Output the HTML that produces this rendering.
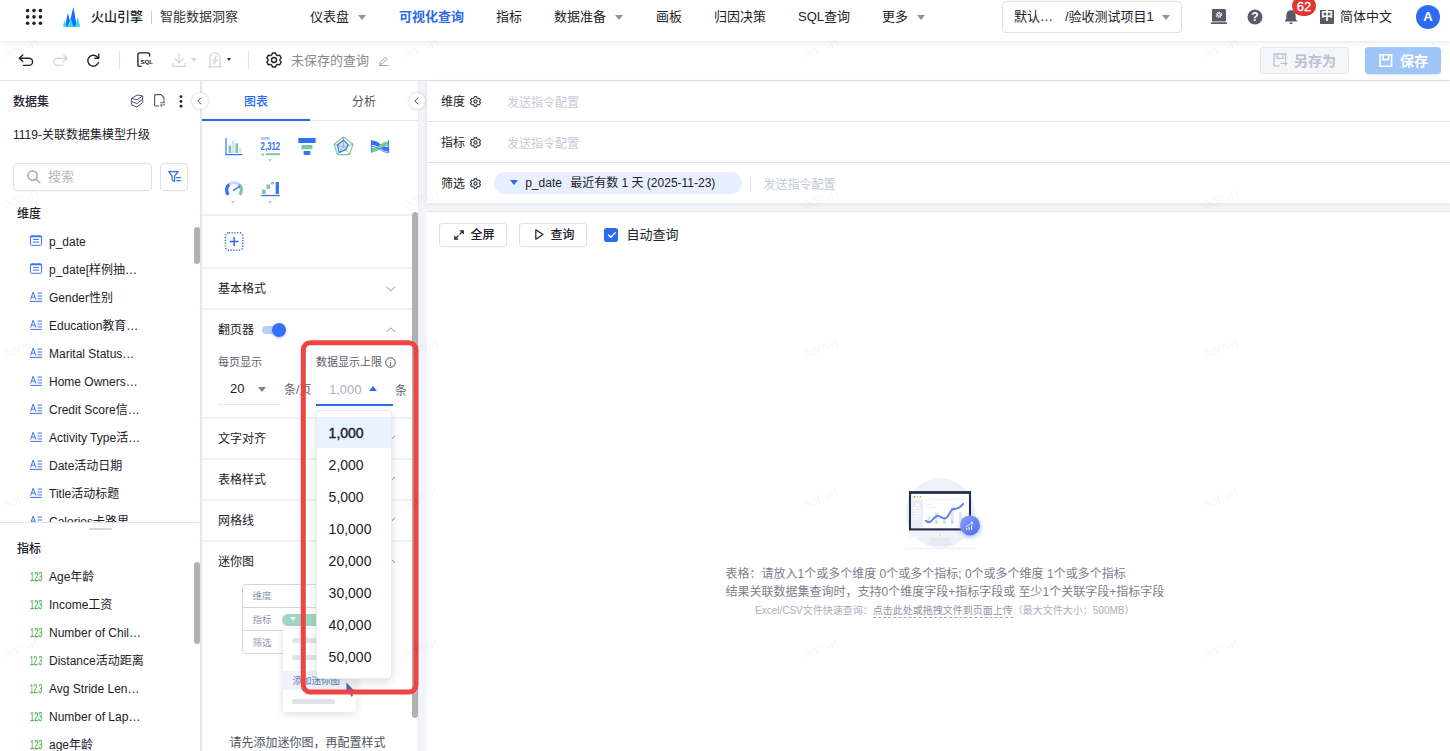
<!DOCTYPE html>
<html lang="zh-CN">
<head>
<meta charset="utf-8">
<title>智能数据洞察</title>
<style>
*{box-sizing:border-box;margin:0;padding:0}
html,body{width:1450px;height:751px;overflow:hidden;background:#fff}
body{font-family:"Liberation Sans","Noto Sans CJK SC",sans-serif;font-size:12px;color:#1d2129;position:relative}
.a{position:absolute;white-space:nowrap}
.t{position:absolute;white-space:nowrap;line-height:20px;height:20px}
svg{position:absolute;overflow:visible}
/* nav */
#nav{position:absolute;left:0;top:0;width:1450px;height:41px;background:#fff;box-shadow:0 1px 5px rgba(0,0,0,.10);z-index:5}
#nav .t{font-size:13px;color:#1d2129;top:7px}
.tri{position:absolute;width:0;height:0;border-left:4px solid transparent;border-right:4px solid transparent;border-top:5px solid #8a93a6}
/* toolbar */
#tb{position:absolute;left:0;top:41px;width:1450px;height:40px;background:#fff;border-bottom:1px solid #dfe2ee}
/* left */
#left{z-index:4;position:absolute;left:0;top:81px;width:202px;height:670px;background:#fff;border-right:2px solid #e4e6f0}
#mid{z-index:3;position:absolute;left:201px;top:81px;width:217px;height:670px;background:#fff}
#gap{position:absolute;left:418px;top:81px;width:9px;height:670px;background:#f3f4f9;box-shadow:inset 1px 0 0 #e9ebf2}
#right{position:absolute;left:427px;top:81px;width:1023px;height:670px;background:#f3f4f9}

.li{position:absolute;left:49px;margin-top:1px;font-size:12px;line-height:20px;height:20px;white-space:nowrap;color:#1d2129}
.n123{-webkit-text-stroke:.25px #52b45a;position:absolute;left:30px;margin-top:1px;font-size:12.5px;line-height:20px;height:20px;color:#52b45a;transform:scaleX(.6);transform-origin:0 50%;white-space:nowrap}
.sb{position:absolute;width:6px;border-radius:3px;background:#b1b1b1}

#mid .t{font-size:12px}
.hd{position:absolute;left:0;width:211px;height:2px;background:#eff1f6}
.dtri{position:absolute;width:0;height:0;border-left:2.6px solid transparent;border-right:2.6px solid transparent;border-top:3px solid #b9c9f9}
.chev{position:absolute}
.dd{position:absolute;left:328px;font-size:14px;line-height:32px;height:32px;color:#1d2129}

#right .t{font-size:12px}
.ph{color:#c5cad6}
.gearS{position:absolute}
.btn{position:absolute;height:23px;border:1px solid #dcdfe6;border-radius:3px;background:#fff}
.wm{position:absolute;font-size:14px;color:rgba(0,0,0,.055);transform:rotate(-20deg);width:60px;height:20px;line-height:20px;text-align:center;z-index:9;pointer-events:none;font-family:"Liberation Sans",sans-serif;letter-spacing:-.3px}
</style>
</head>
<body>
<div id="nav">
<svg style="left:24px;top:7px" width="20" height="20" viewBox="0 0 20 20"><g fill="#1d2129"><circle cx="3.6" cy="3.6" r="1.8"/><circle cx="10" cy="3.6" r="1.8"/><circle cx="16.4" cy="3.6" r="1.8"/><circle cx="3.6" cy="9.9" r="1.8"/><circle cx="10" cy="9.9" r="1.8"/><circle cx="16.4" cy="9.9" r="1.8"/><circle cx="3.6" cy="16.2" r="1.8"/><circle cx="10" cy="16.2" r="1.8"/><circle cx="16.4" cy="16.2" r="1.8"/></g></svg>
<svg style="left:63px;top:7px" width="18" height="20" viewBox="0 0 18 20"><path d="M2 19.7 L4.8 6.1 L7 14 L10.4 0 L14 19.7 Z" fill="#1a6cff"/><path d="M0 19.7 L1.3 13.3 L3.5 19.7Z M4.6 19.7 L7.7 10.9 L10.4 19.7Z M12.2 19.7 L14.7 10 L17.2 19.7Z" fill="#2fdfe6"/></svg>
<div class="t" style="left:91px;font-weight:500">火山引擎</div>
<div class="a" style="left:151px;top:11px;width:1px;height:13px;background:#c9cdd4"></div>
<div class="t" style="left:160px;color:#333">智能数据洞察</div>
<div class="t" style="left:310px">仪表盘</div><div class="tri" style="left:358px;top:15px"></div>
<div class="t" style="left:399px;color:#2b6bf0;font-weight:bold">可视化查询</div>
<div class="t" style="left:496px">指标</div>
<div class="t" style="left:554px">数据准备</div><div class="tri" style="left:615px;top:15px"></div>
<div class="t" style="left:656px">画板</div>
<div class="t" style="left:714px">归因决策</div>
<div class="t" style="left:798px">SQL查询</div>
<div class="t" style="left:882px">更多</div><div class="tri" style="left:917px;top:15px"></div>
<div class="a" style="left:1002px;top:1px;width:180px;height:32px;border:1px solid #dcdfe6;border-radius:4px"></div>
<div class="t" style="left:1014px">默认…</div>
<div class="t" style="left:1065px">/验收测试项目1</div><div class="tri" style="left:1162px;top:15px"></div>
<svg style="left:1211px;top:9px" width="16" height="15" viewBox="0 0 16 15"><rect x="1" y="0" width="14" height="12.4" rx="1.2" fill="#565b66"/><rect x="0" y="13.3" width="16" height="1.6" rx=".5" fill="#565b66"/><circle cx="8" cy="5.8" r="2.5" fill="none" stroke="#fff" stroke-width="1.5" stroke-dasharray="1 0.96"/><circle cx="8" cy="5.8" r="1.9" fill="#fff"/><circle cx="8" cy="5.8" r=".9" fill="#565b66"/></svg>
<svg style="left:1247px;top:9px" width="16" height="16" viewBox="0 0 16 16"><circle cx="8" cy="8" r="7.5" fill="#565b66"/><text x="8" y="12.4" font-size="12" font-weight="bold" fill="#fff" text-anchor="middle" font-family="Liberation Sans, sans-serif">?</text></svg>
<svg style="left:1284px;top:10px" width="14" height="15" viewBox="0 0 14 15"><path d="M7 0.3 C3.8 0.3 2.3 2.8 2.3 5.6 L2.3 8.8 L0.6 11.4 L13.4 11.4 L11.7 8.8 L11.7 5.6 C11.7 2.8 10.2 0.3 7 0.3 Z" fill="#565b66"/><path d="M5.3 12.6 L8.7 12.6 C8.7 14.8 5.3 14.8 5.3 12.6Z" fill="#565b66"/></svg>
<div class="a" style="left:1292px;top:-4px;width:24px;height:20px;border-radius:10px;background:#e03535;color:#fff;font-size:13px;-webkit-text-stroke:.3px #fff;text-align:center;line-height:22px">62</div>
<div class="a" style="left:1320px;top:10px;width:14px;height:14px;background:#565b66;color:#fff;font-size:12px;line-height:13px;text-align:center;font-weight:bold;overflow:hidden">中</div>
<div class="t" style="left:1340px">简体中文</div>
<div class="a" style="left:1416px;top:5px;width:24px;height:24px;border-radius:12px;background:#2d6cf0;color:#fff;font-size:13px;font-weight:bold;text-align:center;line-height:24px">A</div>
</div>
<div id="tb">
<svg style="left:17px;top:11px" width="18" height="16" viewBox="0 0 18 16" fill="none" stroke="#23262d" stroke-width="1.4" stroke-linecap="round" stroke-linejoin="round"><path d="M5.8 3 L2.3 6.3 L5.8 9.6 M2.5 6.3 L12 6.3 A3.55 3.55 0 0 1 12 13.4 L6.4 13.4"/></svg>
<svg style="left:51px;top:11px" width="18" height="16" viewBox="0 0 18 16" fill="none" stroke="#d3d5da" stroke-width="1.4" stroke-linecap="round" stroke-linejoin="round"><path d="M12.6 3 L16.1 6.3 L12.6 9.6 M15.9 6.3 L6.4 6.3 A3.55 3.55 0 0 0 6.4 13.4 L12 13.4"/></svg>
<svg style="left:85px;top:11px" width="16" height="16" viewBox="0 0 16 16" fill="none" stroke="#23262d" stroke-width="1.4" stroke-linecap="round" stroke-linejoin="round"><path d="M13.06 5.85 A5.5 5.5 0 1 0 13.5 10.6"/><path d="M13.8 2.2 L13.8 6.2 L9.9 6.2"/></svg>
<div class="a" style="left:119px;top:10px;width:1px;height:18px;background:#d5dffa"></div>
<svg style="left:137px;top:11px" width="17" height="16" viewBox="0 0 17 16" fill="none" stroke="#23262d" stroke-width="1.4" stroke-linecap="round" stroke-linejoin="round"><path d="M12.6 4 L12.6 2.6 C12.6 1.6 11.8 0.9 10.9 0.9 L2.7 0.9 C1.7 0.9 0.9 1.7 0.9 2.6 L0.9 12.6 C0.9 13.6 1.7 14.4 2.7 14.4 L4 14.4"/><text x="3.6" y="12.4" font-size="6.2" font-weight="bold" fill="#23262d" stroke="none" font-family="Liberation Sans, sans-serif" letter-spacing="-0.2">SQL</text></svg>
<svg style="left:172px;top:11px" width="14" height="16" viewBox="0 0 14 16" fill="none" stroke="#d3d5da" stroke-width="1.3" stroke-linecap="round" stroke-linejoin="round"><path d="M7 1.4 L7 10.6 M2.8 6.6 L7 10.8 L11.2 6.6 M0.8 11.4 L0.8 14.4 L13.2 14.4 L13.2 11.4"/></svg>
<div class="tri" style="left:191px;top:17px;border-top-color:#d3d5da;border-width:4px 3px 0 3px"></div>
<svg style="left:208px;top:11px" width="14" height="16" viewBox="0 0 14 16" fill="none" stroke="#d3d5da" stroke-width="1.2" stroke-linecap="round" stroke-linejoin="round"><path d="M2 14.6 L2 6 C2 -0.8 12 -0.8 12 6 L12 14.6 M0.4 14.8 L13.6 14.8"/><path d="M8 4.4 L4.8 8.8 L9.2 8 L6 12.2 M8 4.4 L7.6 7 M6 12.2 L6.4 9.6" stroke-width="1"/></svg>
<div class="tri" style="left:226.6px;top:17.4px;border-top-color:#23262d;border-width:3.4px 2.8px 0 2.8px"></div>
<div class="a" style="left:248px;top:10px;width:1px;height:18px;background:#d5dffa"></div>
<svg style="left:266px;top:11px" width="16" height="16" viewBox="0 0 16 16" fill="none" stroke="#23262d" stroke-width="1.4" stroke-linejoin="round"><path d="M6.4 1 L9.6 1 L10.3 2.9 L11.6 3.6 L13.6 3.2 L15.2 5.9 L13.9 7.4 L13.9 8.6 L15.2 10.1 L13.6 12.8 L11.6 12.4 L10.3 13.1 L9.6 15 L6.4 15 L5.7 13.1 L4.4 12.4 L2.4 12.8 L0.8 10.1 L2.1 8.6 L2.1 7.4 L0.8 5.9 L2.4 3.2 L4.4 3.6 L5.7 2.9 Z"/><circle cx="8" cy="8" r="2.5"/></svg>
<div class="t" style="left:291px;top:10px;font-size:13px;color:#8a8c91">未保存的查询</div>
<svg style="left:378px;top:15px" width="11" height="10" viewBox="0 0 11 10" fill="none" stroke="#a3a5aa" stroke-width="1" stroke-linejoin="round"><path d="M2.2 6.4 L7.4 1.2 L9 2.8 L3.8 8 L1.8 8.4 Z M0.6 9.5 L10.4 9.5"/></svg>
<div class="a" style="left:1260px;top:5.6px;width:89px;height:27.8px;background:#f5f6f9;border:1px solid #e6e8ee;border-radius:3px"></div>
<svg style="left:1273px;top:12px" width="15" height="14" viewBox="0 0 15 14" fill="none" stroke="#b9c0ce" stroke-width="1.3" stroke-linejoin="round"><path d="M6.6 12.8 L1 12.8 L1 1 L12.6 1 L12.6 7.4 M4 1.2 L4 5.4 L10 5.4 L10 1.2"/><path d="M7.6 10.4 L13.6 10.4 M11.8 8.4 L13.8 10.4 L11.8 12.4" stroke-width="1.2"/></svg>
<div class="t" style="left:1294px;top:9.5px;font-size:14px;font-weight:bold;color:#b9c0ce">另存为</div>
<div class="a" style="left:1365px;top:5.6px;width:76px;height:27.8px;background:#a0c6f8;border-radius:4px;box-shadow:0 1px 2px rgba(60,110,220,.18)"></div>
<svg style="left:1379px;top:13px" width="14" height="13" viewBox="0 0 14 13" fill="none" stroke="#fff" stroke-width="1.6" stroke-linejoin="miter"><path d="M1 0.8 L12.6 0.8 L12.6 12.2 L1 12.2 Z M4 1 L4 5.6 L9.6 5.6 L9.6 1"/></svg>
<div class="t" style="left:1400px;top:9.5px;font-size:14px;font-weight:bold;color:#fff">保存</div>
</div>
<div id="left">
<div class="t" style="left:13px;top:11px;font-weight:500;font-size:12px">数据集</div>
<svg style="left:131px;top:13px" width="12" height="14" viewBox="0 0 12 14" fill="none" stroke="#4a5366" stroke-width="1" stroke-linejoin="round"><path d="M0.5 4.4 L6.2 1 L11.7 2 L5.9 5.8 Z M0.5 4.4 L0.4 7.4 L5.9 9.6 L11.7 5.2 L11.7 2 M0.4 7.4 L0.4 10.8 L5.9 13 L11.7 8.5 L11.7 5.2"/></svg>
<svg style="left:154px;top:13.4px" width="12" height="13" viewBox="0 0 12 13" fill="none" stroke="#4e5461" stroke-width="1.1" stroke-linejoin="round"><path d="M5 12 L1.6 12 C1 12 0.6 11.6 0.6 11 L0.6 1.6 C0.6 1 1 0.6 1.6 0.6 L7 0.6 L10 3.6 L10 6.4"/><path d="M6.2 8.7 L11 8.7 M6.2 10.9 L11 10.9 M9.2 7 L11 8.7 M8 12.6 L6.2 10.9" stroke-width="1.2" stroke="#7d828c"/></svg>
<svg style="left:179px;top:14px" width="4" height="13" viewBox="0 0 4 13" fill="#1d2129"><circle cx="2" cy="1.6" r="1.4"/><circle cx="2" cy="6.4" r="1.4"/><circle cx="2" cy="11.2" r="1.4"/></svg>
<div class="t" style="left:13px;top:44px;font-size:12px">1119-关联数据集模型升级</div>
<div class="a" style="left:13px;top:82px;width:139px;height:28px;border:1px solid #dcdfe8;border-radius:4px"></div>
<svg style="left:27px;top:89px" width="14" height="14" viewBox="0 0 14 14" fill="none" stroke="#a3a9b8" stroke-width="1.5" stroke-linecap="round"><circle cx="5.6" cy="5.6" r="4.6"/><path d="M9 9 L12.8 12.8"/></svg>
<div class="t" style="left:48px;top:86px;font-size:13px;color:#b4b7bf">搜索</div>
<div class="a" style="left:160px;top:82px;width:28px;height:28px;border:1px solid #dcdfe8;border-radius:4px"></div>
<svg style="left:168px;top:90px" width="14" height="12" viewBox="0 0 14 12" fill="none" stroke="#2b6bf0" stroke-width="1.2" stroke-linejoin="round" stroke-linecap="round"><path d="M0.8 0.7 L10 0.7 L6.6 5.4 L6.6 10.6 L4.2 9.2 L4.2 5.4 Z"/><path d="M8.6 6.6 L12.4 6.6 M8.6 9.6 L12.4 9.6" stroke-width="1.1"/></svg>
<div class="t" style="left:17px;top:123px;font-weight:500;font-size:12px">维度</div>
<div class="a" style="left:0;top:0;width:200px;height:441px;overflow:hidden">
<svg style="left:30px;top:154px" width="12" height="11" viewBox="0 0 12 11" fill="none" stroke="#3a73f5"><rect x="0.5" y="1" width="11" height="9.3" rx="0.8" stroke-width="1"/><path d="M0.5 1.5 L11.5 1.5" stroke-width="1.6"/><path d="M2.7 0 L2.7 1 M9.3 0 L9.3 1 M3 4.4 L9 4.4 M3 7.1 L9 7.1" stroke-width="1"/></svg>
<div class="li" style="top:150px">p_date</div>
<svg style="left:30px;top:182px" width="12" height="11" viewBox="0 0 12 11" fill="none" stroke="#3a73f5"><rect x="0.5" y="1" width="11" height="9.3" rx="0.8" stroke-width="1"/><path d="M0.5 1.5 L11.5 1.5" stroke-width="1.6"/><path d="M2.7 0 L2.7 1 M9.3 0 L9.3 1 M3 4.4 L9 4.4 M3 7.1 L9 7.1" stroke-width="1"/></svg>
<div class="li" style="top:178px">p_date[样例抽…</div>
<svg style="left:30px;top:210px" width="12" height="11" viewBox="0 0 12 11" fill="none" stroke="#3a73f5" stroke-width="1"><path d="M0.6 8.6 L3.2 1.2 L5.8 8.6 M1.5 6.2 L4.9 6.2 M0 10.4 L12 10.4 M7.6 2.1 L12 2.1 M7.6 5 L12 5 M7.6 7.9 L12 7.9"/></svg>
<div class="li" style="top:206px">Gender性别</div>
<svg style="left:30px;top:238px" width="12" height="11" viewBox="0 0 12 11" fill="none" stroke="#3a73f5" stroke-width="1"><path d="M0.6 8.6 L3.2 1.2 L5.8 8.6 M1.5 6.2 L4.9 6.2 M0 10.4 L12 10.4 M7.6 2.1 L12 2.1 M7.6 5 L12 5 M7.6 7.9 L12 7.9"/></svg>
<div class="li" style="top:234px">Education教育…</div>
<svg style="left:30px;top:266px" width="12" height="11" viewBox="0 0 12 11" fill="none" stroke="#3a73f5" stroke-width="1"><path d="M0.6 8.6 L3.2 1.2 L5.8 8.6 M1.5 6.2 L4.9 6.2 M0 10.4 L12 10.4 M7.6 2.1 L12 2.1 M7.6 5 L12 5 M7.6 7.9 L12 7.9"/></svg>
<div class="li" style="top:262px">Marital Status…</div>
<svg style="left:30px;top:294px" width="12" height="11" viewBox="0 0 12 11" fill="none" stroke="#3a73f5" stroke-width="1"><path d="M0.6 8.6 L3.2 1.2 L5.8 8.6 M1.5 6.2 L4.9 6.2 M0 10.4 L12 10.4 M7.6 2.1 L12 2.1 M7.6 5 L12 5 M7.6 7.9 L12 7.9"/></svg>
<div class="li" style="top:290px">Home Owners…</div>
<svg style="left:30px;top:322px" width="12" height="11" viewBox="0 0 12 11" fill="none" stroke="#3a73f5" stroke-width="1"><path d="M0.6 8.6 L3.2 1.2 L5.8 8.6 M1.5 6.2 L4.9 6.2 M0 10.4 L12 10.4 M7.6 2.1 L12 2.1 M7.6 5 L12 5 M7.6 7.9 L12 7.9"/></svg>
<div class="li" style="top:318px">Credit Score信…</div>
<svg style="left:30px;top:350px" width="12" height="11" viewBox="0 0 12 11" fill="none" stroke="#3a73f5" stroke-width="1"><path d="M0.6 8.6 L3.2 1.2 L5.8 8.6 M1.5 6.2 L4.9 6.2 M0 10.4 L12 10.4 M7.6 2.1 L12 2.1 M7.6 5 L12 5 M7.6 7.9 L12 7.9"/></svg>
<div class="li" style="top:346px">Activity Type活…</div>
<svg style="left:30px;top:378px" width="12" height="11" viewBox="0 0 12 11" fill="none" stroke="#3a73f5" stroke-width="1"><path d="M0.6 8.6 L3.2 1.2 L5.8 8.6 M1.5 6.2 L4.9 6.2 M0 10.4 L12 10.4 M7.6 2.1 L12 2.1 M7.6 5 L12 5 M7.6 7.9 L12 7.9"/></svg>
<div class="li" style="top:374px">Date活动日期</div>
<svg style="left:30px;top:406px" width="12" height="11" viewBox="0 0 12 11" fill="none" stroke="#3a73f5" stroke-width="1"><path d="M0.6 8.6 L3.2 1.2 L5.8 8.6 M1.5 6.2 L4.9 6.2 M0 10.4 L12 10.4 M7.6 2.1 L12 2.1 M7.6 5 L12 5 M7.6 7.9 L12 7.9"/></svg>
<div class="li" style="top:402px">Title活动标题</div>
<svg style="left:30px;top:434px" width="12" height="11" viewBox="0 0 12 11" fill="none" stroke="#3a73f5" stroke-width="1"><path d="M0.6 8.6 L3.2 1.2 L5.8 8.6 M1.5 6.2 L4.9 6.2 M0 10.4 L12 10.4 M7.6 2.1 L12 2.1 M7.6 5 L12 5 M7.6 7.9 L12 7.9"/></svg>
<div class="li" style="top:430px">Calories卡路里</div>
</div>
<div class="sb" style="left:194px;top:146px;height:37px"></div>
<div class="a" style="left:0;top:441px;width:200px;height:1px;background:#e3e6ef"></div>
<div class="a" style="left:89px;top:447px;width:23px;height:2px;background:#d3d6de;border-radius:1px"></div>
<div class="t" style="left:17px;top:458px;font-weight:500;font-size:12px">指标</div>
<div class="n123" style="top:485px">123</div>
<div class="li" style="top:485px">Age年龄</div>
<div class="n123" style="top:513px">123</div>
<div class="li" style="top:513px">Income工资</div>
<div class="n123" style="top:541px">123</div>
<div class="li" style="top:541px">Number of Chil…</div>
<div class="n123" style="top:569px;transform:scaleX(.51)">12.3</div>
<div class="li" style="top:569px">Distance活动距离</div>
<div class="n123" style="top:597px;transform:scaleX(.51)">12.3</div>
<div class="li" style="top:597px">Avg Stride Len…</div>
<div class="n123" style="top:625px">123</div>
<div class="li" style="top:625px">Number of Lap…</div>
<div class="n123" style="top:653px">123</div>
<div class="li" style="top:653px">age年龄</div>
<div class="sb" style="left:194px;top:481px;height:82px"></div>
</div>
<div id="mid">
<div class="t" style="left:43px;top:11px;color:#2b6bf0;font-weight:500">图表</div>
<div class="t" style="left:151px;top:11px;color:#4e5461">分析</div>
<div class="a" style="left:0;top:39px;width:218px;height:1px;background:#e3e6ef"></div>
<div class="a" style="left:1px;top:38px;width:108px;height:2px;background:#2b6bf0"></div>
<svg style="left:0;top:0" width="218" height="670" viewBox="201 81 218 670">
<g id="ic-bar"><path d="M226 138 L226 154.6 L242.4 154.6" fill="none" stroke="#3370ff" stroke-width="1.2"/><rect x="228.6" y="145.4" width="2.6" height="7.6" fill="#7cc89a"/><rect x="232" y="140.6" width="2.6" height="12.4" fill="#d5e2fb"/><rect x="235.4" y="143.4" width="2.6" height="9.6" fill="#7cc89a"/><rect x="238.8" y="148" width="2.6" height="5" fill="#d5e2fb"/></g>
<g id="ic-num"><rect x="261" y="137.2" width="8.8" height="2.4" fill="#a9c2fa"/><text x="260.6" y="150.2" font-size="10.5" font-weight="bold" fill="#3370ff" font-family="Liberation Sans, sans-serif" textLength="19.6" lengthAdjust="spacingAndGlyphs">2,312</text><path d="M261 155.4 L262.8 152.8 L264.6 155.4 Z" fill="#7cc89a"/><rect x="265.9" y="153.2" width="14.2" height="2" fill="#7cc89a"/></g>
<g id="ic-funnel"><rect x="298.3" y="138" width="17.3" height="5" fill="#3370ff"/><rect x="301.5" y="145" width="10.9" height="4.3" fill="#7cc89a"/><rect x="303.6" y="151" width="6.7" height="3.9" fill="#3370ff"/></g>
<g id="ic-radar" fill="none" stroke-linejoin="round"><path d="M343.5 140.2 L348.4 144.8 L345.7 149.7 L339.1 152.6 L337.4 144.8 Z" fill="#cfdcfb"/><path d="M343.5 137 L353 144.3 L349.4 154.7 L337.5 154.7 L334.1 144.3 Z" stroke="#7cc89a" stroke-width="1.2"/><path d="M343.5 137 L343.5 147 M353 144.3 L343.5 147 M349.4 154.7 L343.5 147 M337.5 154.7 L343.5 147 M334.1 144.3 L343.5 147" stroke="#7cc89a" stroke-width="0.9"/><path d="M343.5 140.2 L348.4 144.8 L345.7 149.7 L339.1 152.6 L337.4 144.8 Z" stroke="#3370ff" stroke-width="1.1"/></g>
<g id="ic-sankey"><path d="M371.4 140.4 C380 140.4 380 147 388.6 147 L388.6 151.4 C380 151.4 380 145 371.4 145 Z" fill="#3370ff"/><path d="M371.4 148 C380 148 380 141.4 388.6 141.4 L388.6 145.8 C380 145.8 380 152.4 371.4 152.4 Z" fill="#7cc89a"/><path d="M371.4 146.4 C380 146.4 380 152.4 388.6 152.4" fill="none" stroke="#3370ff" stroke-width="0.9"/><path d="M371.4 140 L371.4 152.8 M388.6 140 L388.6 152.8" stroke="#3370ff" stroke-width="1"/></g>
<g id="ic-gauge" fill="none" stroke-width="3.2"><path d="M228.33 194.76 A7.4 7.4 0 0 1 229.24 184.33" stroke="#3370ff"/><path d="M229.24 184.33 A7.4 7.4 0 0 1 238.76 184.33" stroke="#c4daf8"/><path d="M238.76 184.33 A7.4 7.4 0 0 1 239.67 194.76" stroke="#7cc89a"/><path d="M233.5 190.4 L239.8 186.4" stroke="#3370ff" stroke-width="1.4" stroke-linecap="round"/></g>
<g id="ic-step"><rect x="261.9" y="189.6" width="3.7" height="4.4" fill="#7cc89a"/><rect x="266.6" y="184.5" width="3.3" height="4.4" fill="#7cc89a"/><rect x="271" y="182" width="3" height="2.4" fill="#7cc89a"/><rect x="275.7" y="182" width="3.2" height="12" fill="#3370ff"/><rect x="261.2" y="194.9" width="18.6" height="1.3" fill="#3370ff"/></g>
<g id="ic-plus"><rect x="225.4" y="232.8" width="17.4" height="17.4" rx="3.4" fill="none" stroke="#2b6bf0" stroke-width="1.5" stroke-dasharray="1.2 1.6"/><path d="M229.6 241.5 L238.6 241.5 M234.1 237 L234.1 246" stroke="#2b6bf0" stroke-width="1.5"/></g>
</svg>
<div class="dtri" style="left:66.8px;top:78px"></div>
<div class="dtri" style="left:30.4px;top:120px"></div>
<div class="dtri" style="left:66.8px;top:120px"></div>
<div class="hd" style="top:133px"></div>
<div class="hd" style="top:186px"></div>
<div class="t" style="left:17px;top:198px">基本格式</div><svg style="left:185px;top:205px" width="10" height="6" viewBox="0 0 10 6" fill="none" stroke="#8a8f99" stroke-width="1"><path d="M0.5 0.8 L4.8 4.8 L9.1 0.8"/></svg>
<div class="hd" style="top:227px"></div>
<div class="t" style="left:17px;top:239px">翻页器</div><svg style="left:185px;top:246px" width="10" height="6" viewBox="0 0 10 6" fill="none" stroke="#8a8f99" stroke-width="1"><path d="M0.5 4.8 L4.8 0.8 L9.1 4.8"/></svg>
<div class="a" style="left:61px;top:245px;width:22px;height:8px;border-radius:4px;background:#b9cdfb"></div>
<div class="a" style="left:71px;top:241.6px;width:14px;height:14px;border-radius:7px;background:#3370ff;box-shadow:0 1px 3px rgba(40,80,200,.35)"></div>
<div class="t" style="left:17px;top:271px;font-size:11px;color:#5a5e66">每页显示</div>
<div class="t" style="left:115px;top:271px;font-size:11px;color:#5a5e66">数据显示上限</div>
<svg style="left:183.6px;top:275.6px" width="11" height="11" viewBox="0 0 11 11"><circle cx="5.5" cy="5.5" r="4.8" fill="none" stroke="#3c4048" stroke-width="0.9"/><text x="5.5" y="8.6" font-size="8.4" font-style="italic" fill="#3c4048" text-anchor="middle" font-family="Liberation Serif, serif">i</text></svg>
<div class="t" style="left:29px;top:297.6px;font-size:13px">20</div>
<div class="tri" style="left:57px;top:305.6px;border-top-color:#7a8599"></div>
<div class="t" style="left:83px;top:299px;font-size:12px;color:#5a5e66">条/页</div>
<div class="a" style="left:17px;top:323px;width:63px;height:1px;background:#e5e7ee"></div>
<div class="t" style="left:128px;top:298.8px;font-size:13px;color:#a9b0c2">1,000</div>
<div class="a" style="left:168px;top:305.4px;width:0;height:0;border-left:4px solid transparent;border-right:4px solid transparent;border-bottom:5px solid #2b6bf0"></div>
<div class="t" style="left:194px;top:299.5px;font-size:12px;color:#5a5e66">条</div>
<div class="a" style="left:115px;top:323.4px;width:77px;height:2px;background:#2b6bf0"></div>
<div class="hd" style="top:336px"></div>
<div class="t" style="left:17px;top:347.6px">文字对齐</div><svg style="left:185px;top:354px" width="10" height="6" viewBox="0 0 10 6" fill="none" stroke="#8a8f99" stroke-width="1"><path d="M0.5 0.8 L4.8 4.8 L9.1 0.8"/></svg>
<div class="hd" style="top:377px"></div>
<div class="t" style="left:17px;top:388.6px">表格样式</div><svg style="left:185px;top:395px" width="10" height="6" viewBox="0 0 10 6" fill="none" stroke="#8a8f99" stroke-width="1"><path d="M0.5 0.8 L4.8 4.8 L9.1 0.8"/></svg>
<div class="hd" style="top:418px"></div>
<div class="t" style="left:17px;top:430px">网格线</div><svg style="left:185px;top:436px" width="10" height="6" viewBox="0 0 10 6" fill="none" stroke="#8a8f99" stroke-width="1"><path d="M0.5 0.8 L4.8 4.8 L9.1 0.8"/></svg>
<div class="hd" style="top:459.4px"></div>
<div class="t" style="left:17px;top:470.6px">迷你图</div><svg style="left:185px;top:477px" width="10" height="6" viewBox="0 0 10 6" fill="none" stroke="#8a8f99" stroke-width="1"><path d="M0.5 4.8 L4.8 0.8 L9.1 4.8"/></svg>
<div class="a" style="left:41px;top:502.5px;width:140px;height:70px;border:1px solid #cdd5e3;border-radius:4px"></div>
<div class="a" style="left:41px;top:525.6px;width:140px;height:1px;background:#cdd5e3"></div>
<div class="a" style="left:41px;top:549px;width:140px;height:1px;background:#cdd5e3"></div>
<div class="t" style="left:51.6px;top:505px;font-size:9.5px;color:#8f99ad">维度</div>
<div class="t" style="left:51.6px;top:528.5px;font-size:9.5px;color:#8f99ad">指标</div>
<div class="t" style="left:51.6px;top:551.5px;font-size:9.5px;color:#8f99ad">筛选</div>
<div class="a" style="left:81.3px;top:532.6px;width:60px;height:12px;border-radius:6px;background:#9fd6c1"></div>
<div class="a" style="left:89.4px;top:536.4px;width:0;height:0;border-left:3.2px solid transparent;border-right:3.2px solid transparent;border-top:4px solid #fff"></div>
<div class="a" style="left:82.4px;top:548.3px;width:73px;height:82.6px;background:#fff;border-radius:3px;box-shadow:0 2px 8px rgba(60,80,120,.18)"></div>
<div class="a" style="left:91px;top:557.4px;width:44px;height:4.4px;border-radius:2.2px;background:#dfe3ea"></div>
<div class="a" style="left:91px;top:574.4px;width:44px;height:4.4px;border-radius:2.2px;background:#dfe3ea"></div>
<div class="a" style="left:82.4px;top:589.6px;width:73px;height:19px;background:#f0f2f7"></div>
<div class="t" style="left:91.6px;top:589.6px;font-size:9.5px;color:#5b80c0">添加迷你图</div>
<div class="a" style="left:91px;top:618.4px;width:43px;height:4.4px;border-radius:2.2px;background:#dfe3ea"></div>
<svg style="left:144.6px;top:600.6px" width="9" height="16" viewBox="0 0 9 16"><path d="M0.4 0.4 L0.4 12.4 L3.2 9.8 L5.2 14.8 L7 14 L5 9.2 L8.6 9 Z" fill="#4a6aa8"/></svg>
<div class="t" style="left:28.4px;top:651.6px;color:#4e5461">请先添加迷你图，再配置样式</div>
<div class="sb" style="left:211px;top:131.4px;height:506px"></div>
<div class="a" style="left:115px;top:328.5px;width:76px;height:269.5px;background:#fff;border:1px solid #e8eaf0;border-radius:4px;box-shadow:0 3px 10px rgba(0,0,0,.13)"></div>
<div class="a" style="left:116px;top:335.5px;width:74px;height:31.7px;background:#e8f3ff"></div>
<div class="dd" style="left:127.6px;top:335.6px;-webkit-text-stroke:.4px #1d2129">1,000</div>
<div class="dd" style="left:127.6px;top:367.6px">2,000</div>
<div class="dd" style="left:127.6px;top:399.6px">5,000</div>
<div class="dd" style="left:127.6px;top:431.6px">10,000</div>
<div class="dd" style="left:127.6px;top:463.6px">20,000</div>
<div class="dd" style="left:127.6px;top:495.6px">30,000</div>
<div class="dd" style="left:127.6px;top:527.6px">40,000</div>
<div class="dd" style="left:127.6px;top:559.6px">50,000</div>
<svg style="left:0;top:0" width="218" height="670" viewBox="201 81 218 670"><rect x="303.3" y="342.7" width="112.7" height="349.3" rx="7" fill="none" stroke="#ef4444" stroke-width="5"/></svg>
</div>
<div id="gap"></div>
<div id="right">
<div class="a" style="left:0;top:0;width:1023px;height:122px;background:#fff;box-shadow:0 1px 4px rgba(40,60,120,.10)"></div>
<div class="a" style="left:0;top:40px;width:1023px;height:1px;background:#e3e6ef"></div>
<div class="a" style="left:0;top:81px;width:1023px;height:1px;background:#e3e6ef"></div>
<div class="t" style="left:14px;top:11.0px;color:#1d2129">维度</div>
<svg class="gearS" style="left:43.2px;top:15.2px" width="11" height="11" viewBox="0 0 16 16" fill="none" stroke="#3c4048" stroke-width="1.7" stroke-linejoin="round"><path d="M6.4 1 L9.6 1 L10.3 2.9 L11.6 3.6 L13.6 3.2 L15.2 5.9 L13.9 7.4 L13.9 8.6 L15.2 10.1 L13.6 12.8 L11.6 12.4 L10.3 13.1 L9.6 15 L6.4 15 L5.7 13.1 L4.4 12.4 L2.4 12.8 L0.8 10.1 L2.1 8.6 L2.1 7.4 L0.8 5.9 L2.4 3.2 L4.4 3.6 L5.7 2.9 Z"/><circle cx="8" cy="8" r="2.4"/></svg>
<div class="t" style="left:14px;top:52.0px;color:#1d2129">指标</div>
<svg class="gearS" style="left:43.2px;top:56.2px" width="11" height="11" viewBox="0 0 16 16" fill="none" stroke="#3c4048" stroke-width="1.7" stroke-linejoin="round"><path d="M6.4 1 L9.6 1 L10.3 2.9 L11.6 3.6 L13.6 3.2 L15.2 5.9 L13.9 7.4 L13.9 8.6 L15.2 10.1 L13.6 12.8 L11.6 12.4 L10.3 13.1 L9.6 15 L6.4 15 L5.7 13.1 L4.4 12.4 L2.4 12.8 L0.8 10.1 L2.1 8.6 L2.1 7.4 L0.8 5.9 L2.4 3.2 L4.4 3.6 L5.7 2.9 Z"/><circle cx="8" cy="8" r="2.4"/></svg>
<div class="t" style="left:14px;top:92.8px;color:#1d2129">筛选</div>
<svg class="gearS" style="left:43.2px;top:97.0px" width="11" height="11" viewBox="0 0 16 16" fill="none" stroke="#3c4048" stroke-width="1.7" stroke-linejoin="round"><path d="M6.4 1 L9.6 1 L10.3 2.9 L11.6 3.6 L13.6 3.2 L15.2 5.9 L13.9 7.4 L13.9 8.6 L15.2 10.1 L13.6 12.8 L11.6 12.4 L10.3 13.1 L9.6 15 L6.4 15 L5.7 13.1 L4.4 12.4 L2.4 12.8 L0.8 10.1 L2.1 8.6 L2.1 7.4 L0.8 5.9 L2.4 3.2 L4.4 3.6 L5.7 2.9 Z"/><circle cx="8" cy="8" r="2.4"/></svg>
<div class="t ph" style="left:80px;top:12px">发送指令配置</div>
<div class="t ph" style="left:80px;top:53px">发送指令配置</div>
<div class="a" style="left:66.6px;top:91.3px;width:248px;height:21.5px;border-radius:11px;background:#e8efff"></div>
<div class="a" style="left:83.2px;top:99.4px;width:0;height:0;border-left:4.2px solid transparent;border-right:4.2px solid transparent;border-top:5px solid #2b6bf0"></div>
<div class="t" style="left:98.2px;top:92.4px;color:#1d2129">p_date</div>
<div class="t" style="left:143.2px;top:92.4px;color:#1d2129">最近有数 1 天 (2025-11-23)</div>
<div class="a" style="left:323px;top:95px;width:1px;height:16px;background:#e0e3ec"></div>
<div class="t ph" style="left:336.6px;top:94px">发送指令配置</div>
<div class="a" style="left:0;top:130px;width:1023px;height:540px;background:#fff;border-top:1px solid #e6e8f0"></div>
<div class="btn" style="left:12px;top:142px;width:67.5px;height:24px"></div>
<svg style="left:27px;top:148.6px" width="10" height="10" viewBox="0 0 10 10" fill="none" stroke="#1d2129" stroke-width="1.2"><path d="M5.8 0.8 L9.2 0.8 L9.2 4.2 M9 1 L5.6 4.4 M4.2 9.2 L0.8 9.2 L0.8 5.8 M1 9 L4.4 5.6"/></svg>
<div class="t" style="left:43.4px;top:144px;font-weight:500;color:#1d2129">全屏</div>
<div class="btn" style="left:92px;top:142px;width:67.6px;height:24px"></div>
<svg style="left:107.6px;top:148px" width="9" height="11" viewBox="0 0 9 11" fill="none" stroke="#1d2129" stroke-width="1.2" stroke-linejoin="round"><path d="M0.8 0.8 L8 5.5 L0.8 10.2 Z"/></svg>
<div class="t" style="left:123.4px;top:144px;font-weight:500;color:#1d2129">查询</div>
<div class="a" style="left:177.3px;top:147.2px;width:13.8px;height:13.8px;border-radius:2.5px;background:#2b6bf0"></div>
<svg style="left:179.6px;top:150.4px" width="10" height="8" viewBox="0 0 10 8" fill="none" stroke="#fff" stroke-width="1.5" stroke-linecap="round" stroke-linejoin="round"><path d="M1.6 4 L3.8 6.2 L8.2 1.8"/></svg>
<div class="t" style="left:199.6px;top:144.4px;font-size:13px;color:#1d2129">自动查询</div>
<svg style="left:0;top:0" width="1023" height="670" viewBox="427 81 1023 670">
<defs><clipPath id="cp1"><rect x="890" y="470" width="110" height="78.3"/></clipPath><linearGradient id="bg1" x1="0" y1="0" x2="1" y2="1"><stop offset="0" stop-color="#86a1fc"/><stop offset="1" stop-color="#4f6cee"/></linearGradient><filter id="gl" x="-50%" y="-50%" width="200%" height="200%"><feGaussianBlur stdDeviation="2.6"/></filter></defs>
<circle cx="940.3" cy="513" r="34.7" fill="#eef1fa" clip-path="url(#cp1)"/>
<rect x="904.4" y="547.9" width="72.5" height="1" fill="#e6eaf4"/>
<path d="M931.3 538 L948.7 538 L953 545.8 L927 545.8 Z" fill="#e5e9f4"/>
<rect x="909" y="529" width="62" height="8.6" rx="1" fill="#f1f3fa"/>
<circle cx="940" cy="534.4" r="1" fill="#cfd5e3"/>
<rect x="910" y="492.4" width="60" height="37" fill="#fff" stroke="#1f2d4a" stroke-width="2.1"/>
<rect x="909" y="491.3" width="62" height="2.4" fill="#1f2d4a"/>
<circle cx="914.3" cy="496.8" r="0.9" fill="#f0625d"/><circle cx="917.3" cy="496.8" r="0.9" fill="#f5c343"/><circle cx="920.3" cy="496.8" r="0.9" fill="#5fcf65"/>
<rect x="911.2" y="499.2" width="57.6" height="0.6" fill="#eef0f5"/>
<rect x="911.8" y="500" width="11.2" height="27.8" fill="#e9edf5"/>
<circle cx="917.3" cy="504.5" r="1.5" fill="#fff"/>
<path d="M913.2 508 L921.6 508 M913.2 510.8 L921.6 510.8 M913.2 513.6 L921.6 513.6 M913.2 516.2 L921.6 516.2 M913.2 518.8 L918 518.8" stroke="#fff" stroke-width="0.9"/>
<path d="M927.1 504.5 L932 504.5 M927.1 507.4 L935.6 507.4" stroke="#e3e7f0" stroke-width="0.7"/>
<g fill="#e2e6ef"><rect x="927.4" y="516" width="2.6" height="7.4"/><rect x="935.3" y="512" width="2.6" height="11.4"/><rect x="943.2" y="517" width="2.6" height="6.4"/><rect x="951" y="507" width="2.6" height="16.4"/><rect x="959.2" y="512" width="2.6" height="11.4"/></g>
<g fill="#cdd3e0"><rect x="927.4" y="521.4" width="2.6" height="2"/><rect x="935.3" y="521" width="2.6" height="2.4"/><rect x="943.2" y="521.6" width="2.6" height="1.8"/><rect x="951" y="520.4" width="2.6" height="3"/></g>
<path d="M925.8 520.8 C927.6 522.4 929.8 522.6 931.8 520.6 C934 518.4 935.6 515.8 937.6 515.8 C940.2 515.8 942.6 519.2 945.2 518.4 C949 517.2 949.8 510.4 952.8 509.2 C955 508.4 956.8 509.2 958.8 507.8 C960.8 506.4 962 505.2 963.2 503.8" fill="none" stroke="#5b7ff5" stroke-width="1.9" stroke-linecap="round"/>
<circle cx="970.4" cy="527" r="10.4" fill="#6f8cf8" opacity=".5" filter="url(#gl)"/>
<circle cx="970" cy="525.4" r="10" fill="url(#bg1)"/>
<g fill="#fff"><rect x="966.2" y="528" width="1" height="1.8"/><rect x="968.6" y="526.8" width="1" height="3"/><rect x="971" y="525.4" width="1.1" height="4.4"/></g>
<path d="M966 527 L972.4 522.6 M970.8 522.2 L972.8 522.2 L972.6 524.2" stroke="#fff" stroke-width="0.8" fill="none" stroke-linecap="round"/>
</svg>
<div class="t" style="left:298.6px;top:483px;color:#7a808c">表格：请放入1个或多个维度 0个或多个指标; 0个或多个维度 1个或多个指标</div>
<div class="t" style="left:298.6px;top:500.7px;color:#7a808c">结果关联数据集查询时，支持0个维度字段+指标字段或 至少1个关联字段+指标字段</div>
<div class="t" style="left:328px;top:520.3px;font-size:10px;color:#a9aebb">Excel/CSV文件快速查询：<span style="color:#8f95a3;border-bottom:1px dashed #a3a8b5;padding-bottom:1px">点击此处或拖拽文件到页面上传</span>（最大文件大小：500MB）</div>
</div>
<div class="a" style="left:191.6px;top:93.2px;width:16px;height:16px;border-radius:8px;background:#fff;box-shadow:0 0 3px rgba(0,0,0,.25);z-index:6"></div>
<svg style="left:197.0px;top:97.2px;z-index:7" width="5" height="8" viewBox="0 0 5 8" fill="none" stroke="#4e5461" stroke-width="1"><path d="M4.2 0.6 L0.8 4 L4.2 7.4"/></svg>
<div class="a" style="left:409px;top:93.2px;width:16px;height:16px;border-radius:8px;background:#fff;box-shadow:0 0 3px rgba(0,0,0,.25);z-index:6"></div>
<svg style="left:414.4px;top:97.2px;z-index:7" width="5" height="8" viewBox="0 0 5 8" fill="none" stroke="#4e5461" stroke-width="1"><path d="M4.2 0.6 L0.8 4 L4.2 7.4"/></svg>
<div class="wm" style="left:-10px;top:38px">admin</div>
<div class="wm" style="left:390px;top:38px">admin</div>
<div class="wm" style="left:790px;top:38px">admin</div>
<div class="wm" style="left:1190px;top:38px">admin</div>
<div class="wm" style="left:-10px;top:188px">admin</div>
<div class="wm" style="left:390px;top:188px">admin</div>
<div class="wm" style="left:790px;top:188px">admin</div>
<div class="wm" style="left:1190px;top:188px">admin</div>
<div class="wm" style="left:-10px;top:338px">admin</div>
<div class="wm" style="left:390px;top:338px">admin</div>
<div class="wm" style="left:790px;top:338px">admin</div>
<div class="wm" style="left:1190px;top:338px">admin</div>
<div class="wm" style="left:-10px;top:488px">admin</div>
<div class="wm" style="left:390px;top:488px">admin</div>
<div class="wm" style="left:790px;top:488px">admin</div>
<div class="wm" style="left:1190px;top:488px">admin</div>
<div class="wm" style="left:-10px;top:638px">admin</div>
<div class="wm" style="left:390px;top:638px">admin</div>
<div class="wm" style="left:790px;top:638px">admin</div>
<div class="wm" style="left:1190px;top:638px">admin</div>
</body>
</html>
